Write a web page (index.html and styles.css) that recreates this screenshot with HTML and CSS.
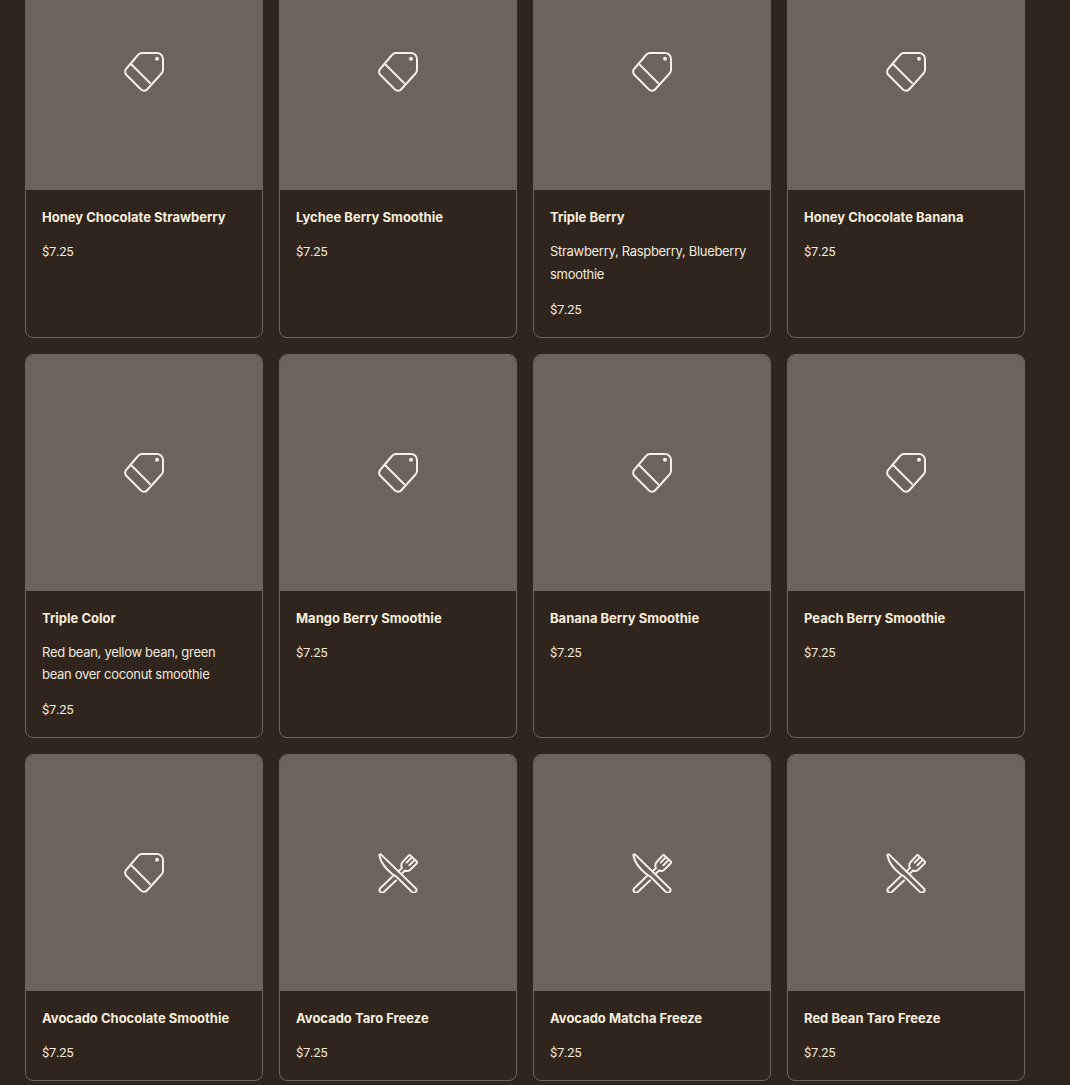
FILE: index.html
```html
<!DOCTYPE html>
<html lang="en">
<head>
<meta charset="utf-8">
<title>Menu</title>
<link rel="stylesheet" href="styles.css">
</head>
<body>
<svg class="defs" width="0" height="0" aria-hidden="true">
  <symbol id="tag" viewBox="0 0 40 40">
    <path d="M17.5 1H33A6 6 0 0 1 39 7V18A5 5 0 0 1 37.5 21.5L23.5 37A4.5 4.5 0 0 1 17 37.5L2.5 23A4.5 4.5 0 0 1 2.5 16.5L14 3A5 5 0 0 1 17.5 1Z"/>
    <path d="M7.5 12.5L26 31"/>
    <circle class="fill" cx="33" cy="6.8" r="2"/>
  </symbol>
  <symbol id="cutlery" viewBox="0 0 40 40">
    <path d="M3.2 1.6L38.4 36A2.8 2.8 0 0 1 34.4 39.4L18 23.3L14.7 21.5C8 16 2.6 9.5 1.6 3A1 1 0 0 1 3.2 1.6Z"/>
    <path d="M20.5 18.5L24 15C22.5 12.5 23.3 10.3 25.3 8.3L30.6 2.6A1.2 1.2 0 0 1 32.4 2.4L38.8 8.4A1.2 1.2 0 0 1 38.8 10.2L32.5 16.5C30.5 18.4 29 18.6 27 17.5L23.5 21"/>
    <path d="M28.6 9.6L33.2 5M31.4 12.2L36 7.6"/>
    <path d="M14.5 23.5L2 35.5A2.6 2.6 0 0 0 5.8 39L18 27.5"/>
  </symbol>
</svg>
<main class="menu">
  <article class="card"><div class="thumb"><svg class="icon"><use href="#tag"/></svg></div><div class="body"><h3 class="name">Honey Chocolate Strawberry</h3><p class="price">$7.25</p></div></article>
  <article class="card"><div class="thumb"><svg class="icon"><use href="#tag"/></svg></div><div class="body"><h3 class="name">Lychee Berry Smoothie</h3><p class="price">$7.25</p></div></article>
  <article class="card"><div class="thumb"><svg class="icon"><use href="#tag"/></svg></div><div class="body"><h3 class="name">Triple Berry</h3><p class="desc">Strawberry, Raspberry, Blueberry smoothie</p><p class="price">$7.25</p></div></article>
  <article class="card"><div class="thumb"><svg class="icon"><use href="#tag"/></svg></div><div class="body"><h3 class="name">Honey Chocolate Banana</h3><p class="price">$7.25</p></div></article>
  <article class="card"><div class="thumb"><svg class="icon"><use href="#tag"/></svg></div><div class="body"><h3 class="name">Triple Color</h3><p class="desc">Red bean, yellow bean, green bean over coconut smoothie</p><p class="price">$7.25</p></div></article>
  <article class="card"><div class="thumb"><svg class="icon"><use href="#tag"/></svg></div><div class="body"><h3 class="name">Mango Berry Smoothie</h3><p class="price">$7.25</p></div></article>
  <article class="card"><div class="thumb"><svg class="icon"><use href="#tag"/></svg></div><div class="body"><h3 class="name">Banana Berry Smoothie</h3><p class="price">$7.25</p></div></article>
  <article class="card"><div class="thumb"><svg class="icon"><use href="#tag"/></svg></div><div class="body"><h3 class="name">Peach Berry Smoothie</h3><p class="price">$7.25</p></div></article>
  <article class="card"><div class="thumb"><svg class="icon"><use href="#tag"/></svg></div><div class="body"><h3 class="name">Avocado Chocolate Smoothie</h3><p class="price">$7.25</p></div></article>
  <article class="card"><div class="thumb"><svg class="icon"><use href="#cutlery"/></svg></div><div class="body"><h3 class="name">Avocado Taro Freeze</h3><p class="price">$7.25</p></div></article>
  <article class="card"><div class="thumb"><svg class="icon"><use href="#cutlery"/></svg></div><div class="body"><h3 class="name">Avocado Matcha Freeze</h3><p class="price">$7.25</p></div></article>
  <article class="card"><div class="thumb"><svg class="icon"><use href="#cutlery"/></svg></div><div class="body"><h3 class="name">Red Bean Taro Freeze</h3><p class="price">$7.25</p></div></article>
</main>
</body>
</html>
```
FILE: styles.css
```css
html, body {
  margin: 0;
  height: 1085px;
  overflow: hidden;
  background: #2f251d;
}
.defs { display: block; height: 0; }
.menu {
  display: grid;
  grid-template-columns: repeat(4, 238px);
  gap: 16px;
  margin-top: -46.6px;
  padding-left: 25px;
  align-items: stretch;
}
.card {
  display: flex;
  flex-direction: column;
  border: 1px solid #6c635c;
  border-radius: 8px;
  overflow: hidden;
}
.thumb {
  height: 236px;
  background: #6c635c;
  display: flex;
  align-items: center;
  justify-content: center;
}
.icon {
  width: 40px;
  height: 40px;
  fill: none;
  stroke: #f5efe6;
  stroke-width: 2;
  stroke-linejoin: round;
  stroke-linecap: round;
}
.fill { fill: #f5efe6; stroke: none; }
.body {
  display: flex;
  flex-direction: column;
  gap: 12px;
  padding: 16px;
}
.name {
  margin: 0;
  font: 700 13px/22px Inter, sans-serif;
  color: #f6eddd;
}
.desc, .price {
  margin: 0;
  font: 400 13px/22.75px Inter, sans-serif;
  letter-spacing: -0.3px;
  color: #f0e9df;
}
.price {
  font-family: Roboto, sans-serif;
  margin-top: 0.9px;
  margin-bottom: -0.9px;
}
```
